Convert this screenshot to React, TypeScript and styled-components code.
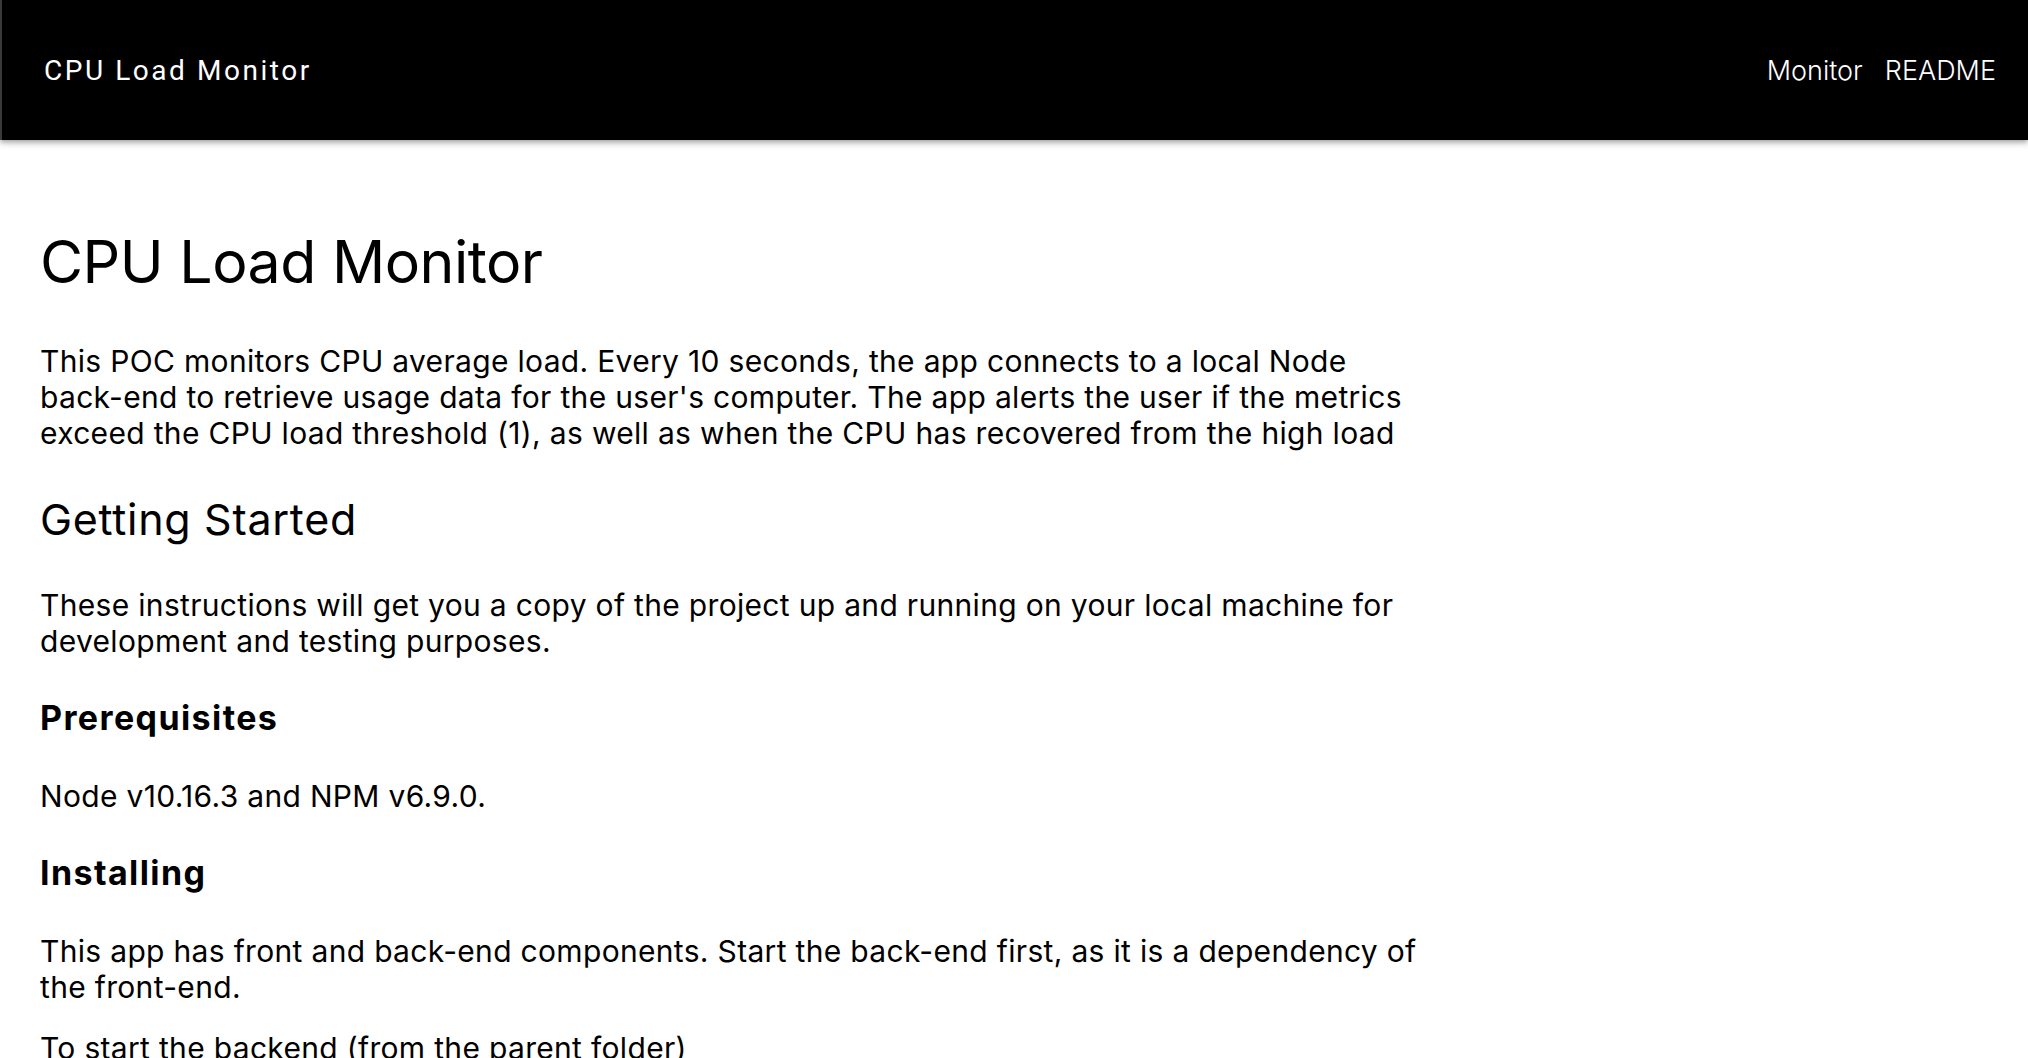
import * as React from "react";
import styled, { createGlobalStyle } from "styled-components";

const GlobalStyle = createGlobalStyle`
  html, body {
    margin: 0;
    padding: 0;
    background: #fff;
  }
  body {
    font-family: Inter, "Noto Sans", sans-serif;
    color: #000;
    -webkit-font-smoothing: antialiased;
  }
`;

const AppBar = styled.header`
  position: relative;
  z-index: 2;
  display: flex;
  align-items: center;
  justify-content: space-between;
  height: 140px;
  padding: 0 32px 0 42px;
  box-sizing: border-box;
  background: #000;
  border-left: 2px solid #3a3a3a;
  box-shadow: 0 2px 4px -1px rgba(0, 0, 0, 0.2), 0 4px 5px 0 rgba(0, 0, 0, 0.14),
    0 1px 10px 0 rgba(0, 0, 0, 0.12);
`;

const Brand = styled.div`
  font-family: Roboto, "Liberation Sans", sans-serif;
  font-size: 28px;
  font-weight: 400;
  letter-spacing: 2.55px;
  color: #fff;
`;

const Nav = styled.nav`
  display: flex;
  gap: 22px;
`;

const NavLink = styled.a`
  font-family: Inter, "Noto Sans", sans-serif;
  font-size: 27px;
  font-weight: 300;
  color: #fff;
  text-decoration: none;
  cursor: pointer;
`;

const Main = styled.main`
  padding: 86px 40px 40px;
`;

const Readme = styled.article`
  max-width: 1400px;
`;

const Title = styled.h1`
  margin: 0 0 45px;
  font-size: 59px;
  font-weight: 400;
  line-height: 72px;
  letter-spacing: -0.5px;
`;

const Heading = styled.h2`
  margin: 43px 0;
  font-size: 43px;
  font-weight: 400;
  line-height: 50px;
  letter-spacing: 0.7px;
`;

const SubHeading = styled.h3`
  margin: 39px 0 40px;
  font-size: 34px;
  font-weight: 700;
  line-height: 40px;
  letter-spacing: 1.4px;
`;

const Para = styled.p`
  margin: 0 0 25px;
  font-size: 30px;
  line-height: 36px;
  letter-spacing: 0.32px;
`;

// keeps hyphenated words on one line
const Word = styled.span`
  white-space: nowrap;
`;

const blocks: { kind: "h2" | "h3" | "p"; text: React.ReactNode }[] = [
  {
    kind: "p",
    text: (
      <>
        This POC monitors CPU average load. Every 10 seconds, the app connects to a local Node{" "}
        <Word>back-end</Word> to retrieve usage data for the user's computer. The app alerts the
        user if the metrics exceed the CPU load threshold (1), as well as when the CPU has
        recovered from the high load
      </>
    ),
  },
  { kind: "h2", text: "Getting Started" },
  {
    kind: "p",
    text: "These instructions will get you a copy of the project up and running on your local machine for development and testing purposes.",
  },
  { kind: "h3", text: "Prerequisites" },
  { kind: "p", text: "Node v10.16.3 and NPM v6.9.0." },
  { kind: "h3", text: "Installing" },
  {
    kind: "p",
    text: (
      <>
        This app has front and <Word>back-end</Word> components. Start the{" "}
        <Word>back-end</Word> first, as it is a dependency of the <Word>front-end</Word>.
      </>
    ),
  },
  { kind: "p", text: "To start the backend (from the parent folder)" },
];

export default function App() {
  return (
    <>
      <GlobalStyle />
      <AppBar>
        <Brand>CPU Load Monitor</Brand>
        <Nav>
          <NavLink>Monitor</NavLink>
          <NavLink>README</NavLink>
        </Nav>
      </AppBar>
      <Main>
        <Readme>
          <Title>CPU Load Monitor</Title>
          {blocks.map((b, i) => {
            if (b.kind === "h2") return <Heading key={i}>{b.text}</Heading>;
            if (b.kind === "h3") return <SubHeading key={i}>{b.text}</SubHeading>;
            return <Para key={i}>{b.text}</Para>;
          })}
        </Readme>
      </Main>
    </>
  );
}
